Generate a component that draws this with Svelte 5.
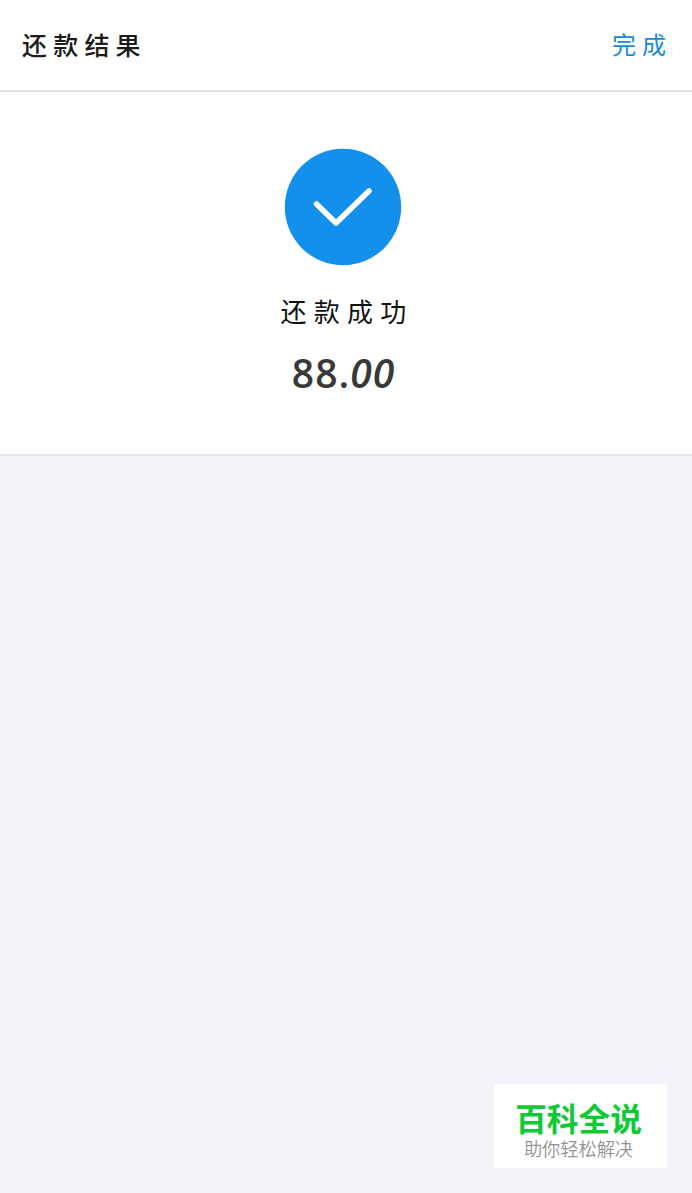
<script>
  let title = "还款结果";
  let action = "完成";
  let status = "还款成功";
  let whole = "88.";
  let cents = "00";
</script>

<main class="page">
  <header class="bar">
    <h1 class="title">{title}</h1>
    <button class="done" type="button">{action}</button>
  </header>

  <section class="result">
    <svg class="icon" xmlns="http://www.w3.org/2000/svg" viewBox="0 0 118 118" fill="none">
      <circle cx="59" cy="59" r="58.2" fill="#138fec" />
      <path d="M32.5 56 52 75 85 43" stroke="#fff" stroke-width="5.5" stroke-linecap="round" stroke-linejoin="round" />
    </svg>
    <p class="status">{status}</p>
    <p class="amount">{whole}<em>{cents}</em></p>
  </section>

  <aside class="badge">
    <strong>百科全说</strong>
    <span>助你轻松解决</span>
  </aside>
</main>

<style>
  :global(body) {
    background: #f3f3f9;
  }
  .page {
    position: relative;
    height: 1193px;
    background: #f3f3f9;
    font-family: "Noto Sans CJK SC", sans-serif;
    overflow: hidden;
  }
  .bar {
    box-sizing: border-box;
    display: flex;
    justify-content: space-between;
    align-items: center;
    height: 92px;
    padding: 0 20px 2px 22px;
    background: #fff;
    border-bottom: 2px solid #e0e0e0;
  }
  .title {
    margin: 0;
    font-size: 25px;
    font-weight: 500;
    line-height: 38px;
    letter-spacing: 6.2px;
    color: #1c1c1c;
  }
  .done {
    padding: 0;
    border: 0;
    background: none;
    font: inherit;
    font-size: 24px;
    line-height: 38px;
    letter-spacing: 6px;
    color: #168bd6;
  }
  .result {
    box-sizing: border-box;
    display: flex;
    flex-direction: column;
    align-items: center;
    height: 364px;
    padding: 56px 6px 0 0;
    background: #fff;
    border-bottom: 2px solid #e6e6e8;
  }
  .icon {
    width: 118px;
    height: 118px;
  }
  .status {
    margin: 26px 0 0;
    padding-left: 8px;
    font-size: 26px;
    line-height: 38px;
    letter-spacing: 7.2px;
    color: #111;
  }
  .amount {
    margin: 18px 0 0;
    padding-left: 1px;
    font-family: "Open Sans", "Noto Sans", sans-serif;
    font-size: 39px;
    font-weight: 600;
    line-height: 50px;
    letter-spacing: 1px;
    color: #383838;
  }
  .badge {
    position: absolute;
    right: 25px;
    bottom: 25px;
    box-sizing: border-box;
    display: flex;
    flex-direction: column;
    align-items: center;
    width: 173px;
    height: 84px;
    padding: 15px 4px 0 0;
    background: #fff;
  }
  .badge strong {
    font-size: 31.7px;
    font-weight: 700;
    line-height: 36px;
    color: #0fca36;
  }
  .badge span {
    margin-top: 1px;
    font-size: 18.2px;
    font-weight: 350;
    line-height: 24px;
    color: #929292;
  }
</style>
